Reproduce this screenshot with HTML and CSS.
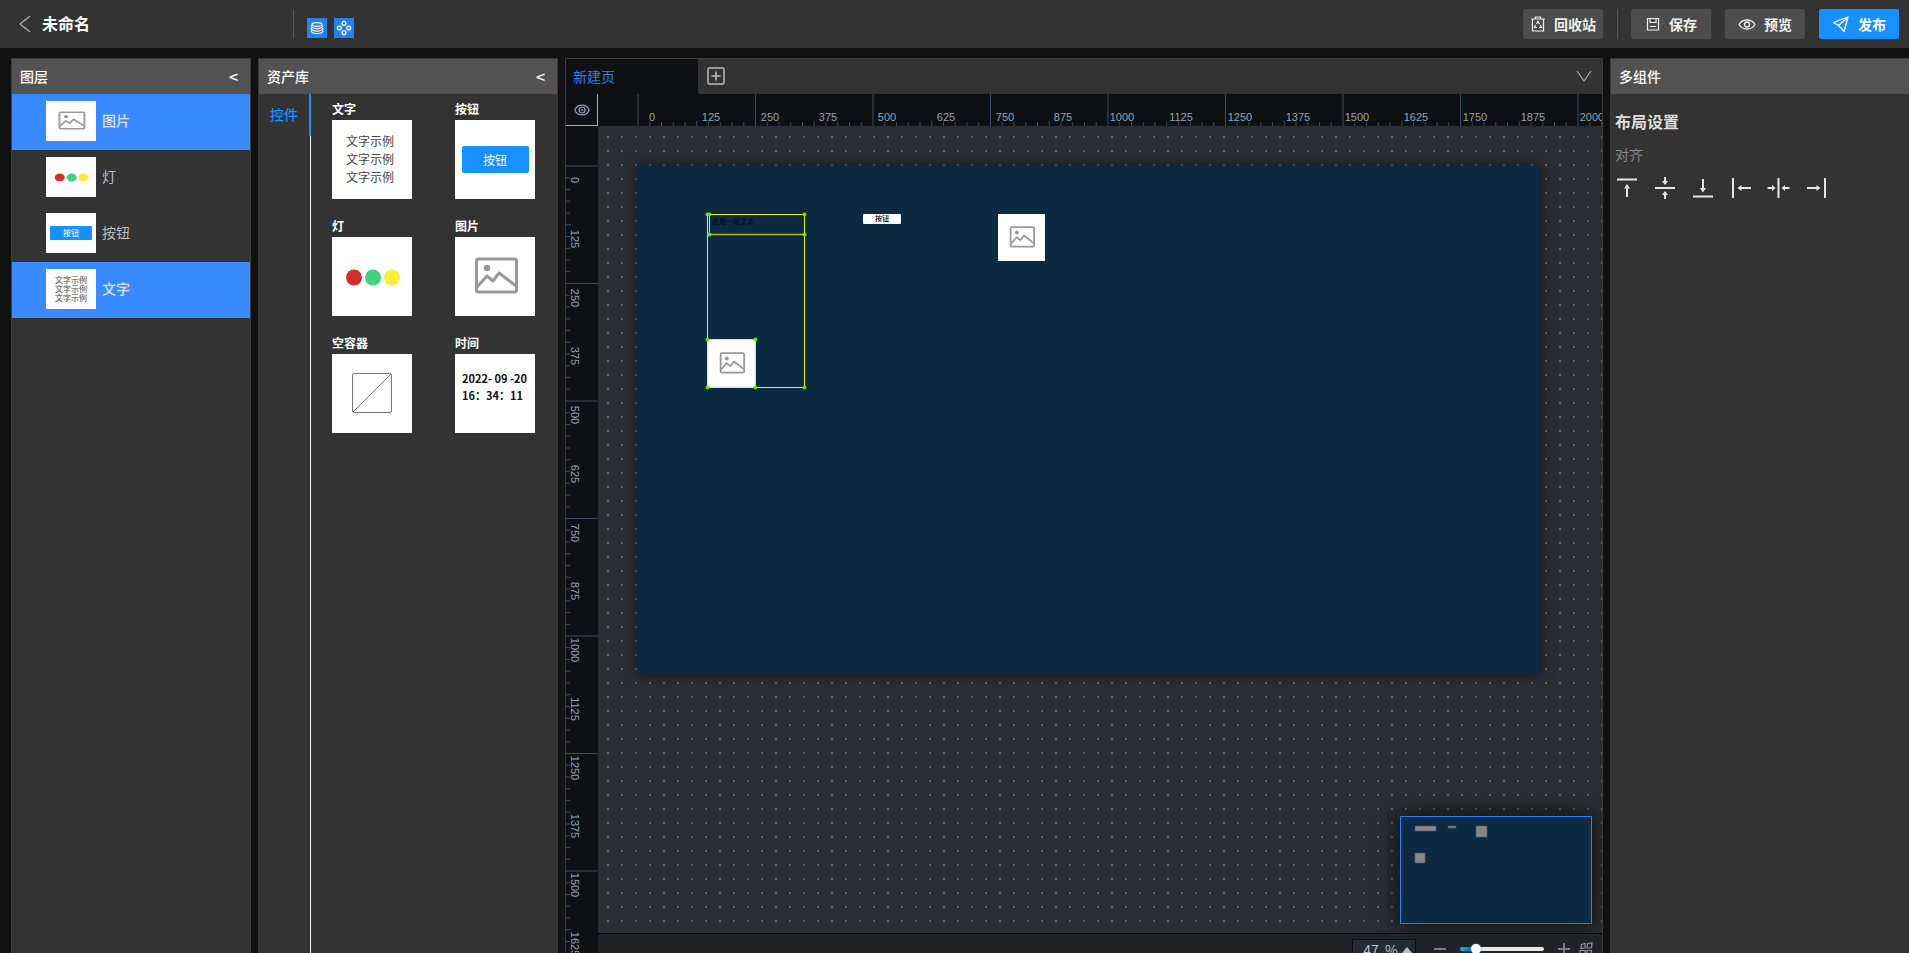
FILE: index.html
```html
<!DOCTYPE html>
<html lang="zh-CN">
<head>
<meta charset="utf-8">
<title>未命名</title>
<link rel="stylesheet" href="styles.css">
</head>
<body>
<svg class="sprite" aria-hidden="true">
  <symbol id="picture" viewBox="0 0 80 79" preserveAspectRatio="none">
    <rect width="80" height="79" fill="#fff"/>
    <g fill="none" stroke="#999" stroke-width="3" stroke-linejoin="round">
      <rect x="21.500" y="22" width="40" height="33" rx="2"/>
      <path d="M22 50 32 39 38 44 44 36 61 49"/>
    </g>
    <circle cx="32" cy="31" r="3.3" fill="#999"/>
  </symbol>
  <symbol id="lights" viewBox="0 0 80 79" preserveAspectRatio="none">
    <rect width="80" height="79" fill="#fff"/>
    <circle cx="22" cy="40.500" r="8" fill="#d32f2f"/>
    <circle cx="41" cy="40.500" r="8" fill="#43d07c"/>
    <circle cx="60" cy="40.500" r="8" fill="#ffeb3b"/>
  </symbol>
</svg>

<header class="topbar">
  <div class="topbar-title">
    <button class="icon-button" aria-label="返回"><svg width="14" height="18" viewBox="0 0 14 18" fill="none" stroke="#aaa" stroke-width="1.4"><path d="M12 1 2 9l10 8"/></svg></button>
    <h1>未命名</h1>
  </div>
  <div class="topbar-toggles">
    <button class="toggle" aria-label="图层"><svg width="14" height="14" viewBox="0 0 14 14" fill="none" stroke="#fff" stroke-width="1.200"><ellipse cx="7" cy="3.500" rx="5" ry="1.800"/><path d="M1.300 4.500v1C3 8.300 11 8.300 12.700 5.500v-1M1.300 7v1C3 10.800 11 10.800 12.700 8V7M1.300 9.500v1C3 13.300 11 13.300 12.700 10.500v-1"/></svg></button>
    <button class="toggle" aria-label="资产库"><svg width="16" height="16" viewBox="0 0 16 16" fill="none" stroke="#fff" stroke-width="1.300"><circle cx="8" cy="3.300" r="1.900"/><circle cx="3.300" cy="8" r="1.900"/><circle cx="12.700" cy="8" r="1.900"/><circle cx="8" cy="12.700" r="1.900"/></svg></button>
  </div>
  <div class="topbar-actions">
    <button class="action"><svg width="16" height="16" viewBox="0 0 16 16" fill="none" stroke="#eee" stroke-width="1.200"><path d="M1 3h14M5.500 2.500V1h5v1.500M2.500 3v12h11V3"/><path d="M6.500 8 8 5.500 9.500 8M5.500 9 4.500 11.500H7M10.300 9l1.200 2.500H9"/></svg>回收站</button>
    <span class="divider"></span>
    <button class="action"><svg width="16" height="16" viewBox="0 0 16 16" fill="none" stroke="#eee" stroke-width="1.200"><path d="M2.500 2.500h11v11.500h-11zM5 2.500v4h6v-4M5 10.500h6"/></svg>保存</button>
    <button class="action"><svg width="18" height="16" viewBox="0 0 18 16" fill="none" stroke="#eee" stroke-width="1.300"><path d="M1 8.500C4.500 2.500 13.500 2.500 17 8.500 13.500 14.500 4.500 14.500 1 8.500z"/><circle cx="9" cy="8.500" r="2.500"/></svg>预览</button>
    <button class="action action-primary"><svg width="18" height="18" viewBox="0 0 18 18" fill="none" stroke="#fff" stroke-width="1.300" stroke-linejoin="round"><path d="M16 2 1.500 7.500 6.500 10.500 16 2 12 16.500 8.500 12.500 6.500 10.500"/></svg>发布</button>
  </div>
</header>

<main class="editor">
  <section class="panel layers">
    <header class="panel-header"><h2>图层</h2><button class="icon-button collapse" aria-label="收起图层">&lt;</button></header>
    <ul class="layer-list">
      <li class="layer selected"><svg class="layer-thumb"><use href="#picture"/></svg><span class="layer-name">图片</span></li>
      <li class="layer"><svg class="layer-thumb"><use href="#lights"/></svg><span class="layer-name">灯</span></li>
      <li class="layer"><span class="layer-thumb mini-button"><span>按钮</span></span><span class="layer-name">按钮</span></li>
      <li class="layer selected"><span class="layer-thumb mini-text">文字示例<br>文字示例<br>文字示例</span><span class="layer-name">文字</span></li>
    </ul>
  </section>

  <section class="panel assets">
    <header class="panel-header"><h2>资产库</h2><button class="icon-button collapse" aria-label="收起资产库">&lt;</button></header>
    <div class="assets-body">
      <nav class="asset-tabs"><button class="asset-tab">控件</button></nav>
      <div class="asset-grid">
        <figure><figcaption>文字</figcaption><div class="thumb thumb-text">文字示例<br>文字示例<br>文字示例</div></figure>
        <figure><figcaption>按钮</figcaption><div class="thumb thumb-button"><span>按钮</span></div></figure>
        <figure><figcaption>灯</figcaption><svg class="thumb"><use href="#lights"/></svg></figure>
        <figure><figcaption>图片</figcaption><svg class="thumb"><use href="#picture"/></svg></figure>
        <figure><figcaption>空容器</figcaption><svg class="thumb" viewBox="0 0 80 79"><rect width="80" height="79" fill="#fff"/><g fill="none" stroke="#777"><rect x="20.500" y="19.500" width="39" height="39" rx="1.500"/><path d="M21 58 59 20"/></g></svg></figure>
        <figure><figcaption>时间</figcaption><div class="thumb thumb-time">2022- 09 -20<br>16：34：11</div></figure>
      </div>
    </div>
  </section>

  <section class="panel workspace">
    <nav class="pages">
      <button class="page-tab">新建页</button>
      <button class="icon-button add-page" aria-label="新建页面"><svg width="18" height="18" viewBox="0 0 18 18" fill="none" stroke="#bbb"><rect x="1" y="1" width="16" height="16" rx="1" stroke-width="1.500"/><path d="M9 4.500v9M4.500 9h9" stroke-width="1.600"/></svg></button>
      <button class="icon-button page-menu" aria-label="页面列表"><svg width="16" height="12" viewBox="0 0 16 12" fill="none" stroke="#aaa" stroke-width="1.200"><path d="M1 1l7 10 7-10"/></svg></button>
    </nav>
    <div class="board">
      <button class="icon-button corner" aria-label="显示参考线"><svg width="16" height="12" viewBox="0 0 16 12" fill="none" stroke="#8fa1b0" stroke-width="1.200"><path d="M.8 6C3.500-.5 12.500-.5 15.200 6 12.500 12.500 3.500 12.500.8 6z"/><circle cx="8" cy="6" r="3"/><circle cx="8" cy="6" r="1" stroke-width=".8"/></svg></button>
      <svg class="ruler ruler-x" id="ruler-x"></svg>
      <svg class="ruler ruler-y" id="ruler-y"></svg>
      <div class="canvas">
        <div class="stage">
          <div class="node node-text">这是一段文本</div>
          <div class="node node-button">按钮</div>
          <svg class="node node-picture"><use href="#picture"/></svg>
          <svg class="node node-picture node-picture-selected"><use href="#picture"/></svg>
          <svg class="selection" viewBox="0 0 100 176">
            <g fill="none" stroke="#f2f20d"><path d="M1.500 1.500h97v173h-97zM3.500 1.500v20M1.500 126.500h48v48"/><path d="M3.500 21.500h95" stroke="#b5b51a" stroke-width="1.500"/></g>
            <g fill="#5fe312"><circle cx="1.500" cy="1.500" r="2"/><circle cx="3.500" cy="1.500" r="2"/><circle cx="98.500" cy="1.500" r="2"/><circle cx="3.500" cy="21.500" r="2"/><circle cx="98.500" cy="21.500" r="2"/><circle cx="1.500" cy="126.500" r="2"/><circle cx="49.500" cy="126.500" r="2"/><circle cx="1.500" cy="174.500" r="2"/><circle cx="49.500" cy="174.500" r="2"/><circle cx="98.500" cy="174.500" r="2"/></g>
          </svg>
        </div>
        <div class="minimap"><svg width="190" height="106" viewBox="0 0 190 106" fill="#888"><g stroke="#4a5a68" stroke-width=".6"><rect x="14" y="9" width="21" height="5"/><rect x="47" y="9" width="8" height="2"/><rect x="75" y="9" width="11" height="11"/><rect x="14" y="36" width="10" height="10"/></g></svg></div>
      </div>
      <footer class="zoombar">
        <button class="zoom-value">47&nbsp; %<svg width="10" height="6" viewBox="0 0 10 6" fill="#b9c2cc"><path d="M0 6 5 0l5 6z"/></svg></button>
        <button class="icon-button" aria-label="缩小"><svg width="12" height="12" stroke="#76808a" stroke-width="2"><path d="M0 6h12"/></svg></button>
        <input class="zoom-slider" type="range" min="0" max="100" value="15" aria-label="缩放">
        <button class="icon-button" aria-label="放大"><svg width="12" height="12" stroke="#76808a" stroke-width="2"><path d="M0 6h12M6 0v12"/></svg></button>
        <button class="icon-button map-toggle" aria-label="小地图"><svg width="14" height="14" viewBox="0 0 14 14" fill="none" stroke="#8b949d" stroke-width="1.200"><path d="M2.500 2.500 6 1.500v4.500L2 6.500zM8.500 1.500 13 1l-.5 5H8zM1 8.500h5v4.500H1zM8 8.500h4.500V13H8z"/></svg></button>
      </footer>
    </div>
  </section>

  <section class="panel inspector">
    <header class="panel-header"><h2>多组件</h2></header>
    <div class="inspector-body">
      <h3>布局设置</h3>
      <p>对齐</p>
      <div class="align-tools">
        <button class="icon-button" aria-label="顶部对齐"><svg viewBox="0 0 24 24"><path class="bar" d="M2 3.500h20"/><path class="arrow" d="M12 21V9"/><path class="head" d="M9 12.500 12 8l3 4.500z"/></svg></button>
        <button class="icon-button" aria-label="垂直居中"><svg viewBox="0 0 24 24"><path class="bar" d="M2 12h20"/><path class="arrow" d="M12 1v5M12 23v-5"/><path class="head" d="M9 5h6l-3 4zM9 19h6l-3-4z"/></svg></button>
        <button class="icon-button" aria-label="底部对齐"><svg viewBox="0 0 24 24"><path class="bar" d="M2 20.500h20"/><path class="arrow" d="M12 3v11"/><path class="head" d="M9 12h6l-3 4.500z"/></svg></button>
        <button class="icon-button" aria-label="左对齐"><svg viewBox="0 0 24 24"><path class="bar" d="M4 2v20"/><path class="arrow" d="M22 12H11"/><path class="head" d="M12.500 9v6L8.500 12z"/></svg></button>
        <button class="icon-button" aria-label="水平居中"><svg viewBox="0 0 24 24"><path class="bar" d="M11.500 2v20"/><path class="arrow" d="M.5 12h5M22.500 12h-5"/><path class="head" d="M5 9v6l3.500-3zM18 9v6l-3.500-3z"/></svg></button>
        <button class="icon-button" aria-label="右对齐"><svg viewBox="0 0 24 24"><path class="bar" d="M20 2v20"/><path class="arrow" d="M2 12h11"/><path class="head" d="M11.500 9v6l4-3z"/></svg></button>
      </div>
    </div>
  </section>
</main>
<script src="rulers.js"></script>
</body>
</html>
```
FILE: rulers.js
```js
const ZOOM = 0.47;
const ORIGIN = 40;
const DEPTH = 32;

function add(parent, tag, attrs, text) {
  const el = document.createElementNS('http://www.w3.org/2000/svg', tag);
  for (const key in attrs) el.setAttribute(key, attrs[key]);
  if (text !== undefined) el.textContent = text;
  parent.appendChild(el);
}

function drawRuler(id, vertical) {
  const svg = document.getElementById(id);
  svg.replaceChildren();
  const length = vertical ? svg.clientHeight : svg.clientWidth;
  let path = '';
  for (let i = 0; ORIGIN + i * 25 * ZOOM <= length; i++) {
    const p = ORIGIN + i * 25 * ZOOM;
    const size = i % 10 === 0 ? DEPTH : i % 5 === 0 ? 5 : 4;
    path += vertical ? `M0 ${p}h${size}` : `M${p} ${DEPTH}v${-size}`;
  }
  add(svg, 'path', { d: path, class: 'ticks' });
  for (let value = 0; ORIGIN + value * ZOOM <= length; value += 125) {
    const p = Math.round(ORIGIN + 14 + value * ZOOM);
    add(svg, 'text', vertical
      ? { transform: `translate(5 ${p}) rotate(90)` }
      : { x: p, y: 27 }, value);
  }
}

function drawRulers() {
  drawRuler('ruler-x', false);
  drawRuler('ruler-y', true);
}

drawRulers();
window.addEventListener('resize', drawRulers);
```
FILE: styles.css
```css
* { box-sizing: border-box; }

body {
  margin: 0;
  height: 100vh;
  display: flex;
  flex-direction: column;
  overflow: hidden;
  background: #111;
  color: #fff;
  font: 14px/20px "Noto Sans CJK SC", "Noto Sans", sans-serif;
}

h1, h2, h3, p, ul, figure { margin: 0; padding: 0; }
ul { list-style: none; }
button { font: inherit; color: inherit; border: 0; padding: 0; background: none; cursor: pointer; }
svg { display: block; }
.sprite { position: absolute; width: 0; height: 0; }
.icon-button { display: flex; align-items: center; justify-content: center; }

/* top bar */
.topbar { flex: none; height: 48px; display: flex; align-items: center; padding-right: 10px; background: #333; }
.topbar-title { width: 294px; height: 28px; padding-left: 18px; display: flex; align-items: center; gap: 10px; border-right: 1px solid #555; }
.topbar-title h1 { padding-bottom: 2px; font-size: 16px; font-weight: 700; }
.topbar-toggles { display: flex; gap: 7px; padding: 8px 0 0 13px; }
.toggle { width: 20px; height: 20px; background: #2680eb; display: flex; align-items: center; justify-content: center; }
.topbar-actions { margin-left: auto; display: flex; align-items: center; gap: 14px; }
.action { width: 80px; height: 30px; padding-bottom: 1px; border-radius: 2px; background: #4d4d4d; color: #eee; font-weight: 700; display: flex; align-items: center; justify-content: center; gap: 8px; }
.action-primary { background: #1890ff; color: #fff; }
.divider { width: 1px; height: 30px; margin-right: -1px; background: #555; }

/* panels */
.editor { flex: 1; min-height: 0; display: flex; gap: 7px; padding: 10px 0 0 11px; }
.panel { display: flex; flex-direction: column; min-height: 0; background: #333; border: 1px solid #3c3c3c; border-bottom: 0; }
.panel-header { flex: none; height: 35px; display: flex; align-items: center; justify-content: space-between; padding: 0 12px 2px 8px; background: #525252; }
.panel-header h2 { font-size: 14px; font-weight: 500; }
.collapse { font-size: 16px; font-weight: 500; }
.layers { flex: none; width: 240px; }
.assets { flex: none; width: 300px; }
.workspace { flex: 1; min-width: 0; }
.inspector { flex: none; width: 299px; border-right: 0; }

.layer { height: 56px; padding: 7px 0 9px 34px; display: flex; align-items: center; gap: 6px; color: #bbb; }
.layer.selected { background: #3a8aff; color: #dde4f0; font-weight: 500; }
.layer-name { padding-bottom: 3px; }
.layer-thumb { flex: none; width: 50px; height: 40px; background: #fff; overflow: hidden; }
.mini-button { display: flex; align-items: center; justify-content: center; }
.mini-button span { width: 42px; height: 14px; border-radius: 1px; background: #1890ff; color: #fff; font-size: 8px; line-height: 14px; text-align: center; }
.mini-text { padding: 6px 0 0 9px; font-size: 8px; line-height: 9px; font-weight: 400; color: #444; }

.assets-body { flex: 1; min-height: 0; display: flex; }
.asset-tabs { width: 52px; border-right: 1px solid #fff; }
.asset-tab { width: 52px; height: 42px; padding-bottom: 2px; border-right: 2px solid #1890ff; color: #1890ff; font-weight: 500; }
.asset-grid { flex: 1; display: grid; grid-template-columns: 80px 80px; align-content: start; gap: 16px 43px; padding: 4px 0 0 21px; }
.asset-grid figcaption { font-size: 12px; line-height: 22px; font-weight: 700; }
.thumb { width: 80px; height: 79px; background: #fff; font-size: 12px; line-height: 18px; color: #444; }
.thumb-text { padding: 12px 0 0 14px; }
.thumb-button { display: flex; align-items: center; justify-content: center; }
.thumb-button span { width: 67px; height: 27px; border-radius: 2px; background: #1890ff; color: #fff; line-height: 27px; text-align: center; }
.thumb-time { padding: 16px 0 0 7px; font-size: 11px; line-height: 17px; font-weight: 700; color: #111; white-space: nowrap; }

/* workspace */
.pages { flex: none; height: 35px; display: flex; align-items: center; }
.page-tab { width: 132px; height: 35px; padding: 0 0 2px 7px; text-align: left; background: #0e1013; color: #2680eb; }
.add-page { margin: 0 0 1px 9px; }
.page-menu { margin: 0 10px 1px auto; }
.board { flex: 1; min-height: 0; display: grid; grid-template: 32px minmax(0, 1fr) 20px / 32px minmax(0, 1fr); }
.corner { background: #0e1013; border-right: 1px solid #a4afba; border-bottom: 1px solid #a4afba; }
.ruler { width: 100%; height: 100%; overflow: hidden; background: #0e1013; font-family: "Liberation Sans", sans-serif; font-size: 11px; fill: #95a5b4; text-anchor: middle; }
.ruler-y { grid-row: 2 / 4; }
.ticks { stroke: #3a4a60; }

.canvas {
  position: relative;
  overflow: hidden;
  background: #2a2d31 conic-gradient(from 270deg at 2px 2px, #566063 90deg, transparent 0) 9px 10px / 14px 14px;
}
.stage { position: absolute; left: 40px; top: 40px; width: 902px; height: 508px; background: #0e2a42; box-shadow: 0 0 12px rgba(0, 0, 0, .5); }
.node { position: absolute; }
.node-text { left: 74px; top: 50px; color: #050a10; font-size: 7px; line-height: 10px; white-space: nowrap; }
.node-button { left: 225px; top: 48px; width: 38px; height: 10px; border-radius: 1px; background: #fff; color: #000; font-size: 7px; line-height: 9px; font-weight: 500; text-align: center; }
.node-picture { left: 360px; top: 48px; width: 47px; height: 47px; }
.node-picture-selected { left: 70px; top: 174px; }
.selection { position: absolute; left: 68px; top: 47px; width: 100px; height: 176px; overflow: visible; }
.minimap { position: absolute; right: 10px; bottom: 9px; border: 1px solid #2681ff; background: #0e2a42; box-shadow: 0 0 20px rgba(0, 0, 0, .8); }

.zoombar { border-top: 1px solid #000; background: #202426; overflow: hidden; display: flex; align-items: flex-start; justify-content: flex-end; gap: 14px; padding: 5px 9px 0 0; }
.zoombar > .icon-button { flex: none; height: 20px; }
.zoombar > .map-toggle { margin-left: -5px; }
.zoom-value { flex: none; width: 64px; height: 22px; margin-right: 4px; border: 1px solid #0b0d0f; background: #242b33; color: #b9c2cc; font-size: 14px; line-height: 18px; display: flex; align-items: center; justify-content: flex-end; gap: 4px; padding-right: 3px; }
.zoom-slider { appearance: none; flex: none; width: 84px; height: 4px; margin: 8px 0 0; border-radius: 2px; background: linear-gradient(90deg, #00b7ff, #1e5f9c 15%, #e8e8e8 15%); }
.zoom-slider::-webkit-slider-thumb { appearance: none; width: 10px; height: 10px; border-radius: 50%; background: #fff; box-shadow: 0 0 2px #40b8ff; }

/* inspector */
.inspector-body { padding: 17px 4px; }
.inspector h3 { font-size: 16px; font-weight: 700; color: #ddd; }
.inspector p { margin-top: 13px; color: #888; }
.align-tools { display: flex; gap: 14px; margin-top: 12px; }
.align-tools svg { width: 24px; height: 24px; fill: none; stroke: #e6e6e6; }
.align-tools .bar { stroke-width: 2; }
.align-tools .arrow { stroke-width: 2; }
.align-tools .head { fill: #e6e6e6; stroke: none; }
```
